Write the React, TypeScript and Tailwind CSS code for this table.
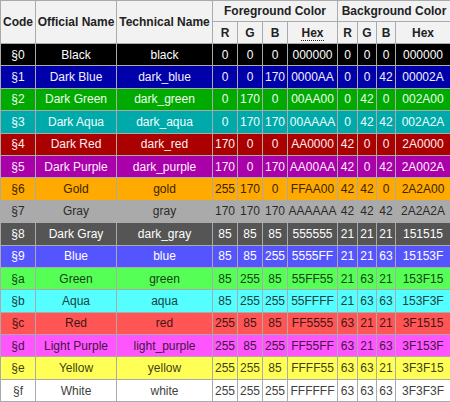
const rows = [
  { code: "§0", name: "Black", tech: "black", fg: ["0", "0", "0", "000000"], bg: ["0", "0", "0", "000000"], cls: "bg-[#000000] text-white" },
  { code: "§1", name: "Dark Blue", tech: "dark_blue", fg: ["0", "0", "170", "0000AA"], bg: ["0", "0", "42", "00002A"], cls: "bg-[#0000AA] text-[#f0f0ff]" },
  { code: "§2", name: "Dark Green", tech: "dark_green", fg: ["0", "170", "0", "00AA00"], bg: ["0", "42", "0", "002A00"], cls: "bg-[#00AA00] text-[#f0fff0]" },
  { code: "§3", name: "Dark Aqua", tech: "dark_aqua", fg: ["0", "170", "170", "00AAAA"], bg: ["0", "42", "42", "002A2A"], cls: "bg-[#00AAAA] text-[#f0ffff]" },
  { code: "§4", name: "Dark Red", tech: "dark_red", fg: ["170", "0", "0", "AA0000"], bg: ["42", "0", "0", "2A0000"], cls: "bg-[#AA0000] text-[#fff0f0]" },
  { code: "§5", name: "Dark Purple", tech: "dark_purple", fg: ["170", "0", "170", "AA00AA"], bg: ["42", "0", "42", "2A002A"], cls: "bg-[#AA00AA] text-[#fff0ff]" },
  { code: "§6", name: "Gold", tech: "gold", fg: ["255", "170", "0", "FFAA00"], bg: ["42", "42", "0", "2A2A00"], cls: "bg-[#FFAA00] text-[#3a2400]" },
  { code: "§7", name: "Gray", tech: "gray", fg: ["170", "170", "170", "AAAAAA"], bg: ["42", "42", "42", "2A2A2A"], cls: "bg-[#AAAAAA] text-[#2a2a2a]" },
  { code: "§8", name: "Dark Gray", tech: "dark_gray", fg: ["85", "85", "85", "555555"], bg: ["21", "21", "21", "151515"], cls: "bg-[#555555] text-white" },
  { code: "§9", name: "Blue", tech: "blue", fg: ["85", "85", "255", "5555FF"], bg: ["21", "21", "63", "15153F"], cls: "bg-[#5555FF] text-white" },
  { code: "§a", name: "Green", tech: "green", fg: ["85", "255", "85", "55FF55"], bg: ["21", "63", "21", "153F15"], cls: "bg-[#55FF55] text-[#153F15]" },
  { code: "§b", name: "Aqua", tech: "aqua", fg: ["85", "255", "255", "55FFFF"], bg: ["21", "63", "63", "153F3F"], cls: "bg-[#55FFFF] text-[#153F3F]" },
  { code: "§c", name: "Red", tech: "red", fg: ["255", "85", "85", "FF5555"], bg: ["63", "21", "21", "3F1515"], cls: "bg-[#FF5555] text-[#3F1515]" },
  { code: "§d", name: "Light Purple", tech: "light_purple", fg: ["255", "85", "255", "FF55FF"], bg: ["63", "21", "63", "3F153F"], cls: "bg-[#FF55FF] text-[#3F153F]" },
  { code: "§e", name: "Yellow", tech: "yellow", fg: ["255", "255", "85", "FFFF55"], bg: ["63", "63", "21", "3F3F15"], cls: "bg-[#FFFF55] text-[#3F3F15]" },
  { code: "§f", name: "White", tech: "white", fg: ["255", "255", "255", "FFFFFF"], bg: ["63", "63", "63", "3F3F3F"], cls: "bg-[#FFFFFF] text-[#3F3F3F]" },
];

const th = "border border-[#aaaaaa] bg-[#f2f2f2] text-[#222222] font-bold text-center p-0";
const td = "border border-[#aaaaaa] text-center p-0 whitespace-nowrap";

export default function App() {
  return (
    <div className="w-[450px] h-[402px] overflow-hidden bg-white font-['Liberation_Sans',Arial,sans-serif] text-[12px] leading-none">
      <table className="table-fixed border-collapse w-[450px]">
        <colgroup>
          <col className="w-[35px]" />
          <col className="w-[81px]" />
          <col className="w-[96px]" />
          <col className="w-[25px]" />
          <col className="w-[25px]" />
          <col className="w-[25px]" />
          <col className="w-[50px]" />
          <col className="w-[20px]" />
          <col className="w-[19px]" />
          <col className="w-[19px]" />
          <col className="w-[55px]" />
        </colgroup>
        <thead>
          <tr className="h-[21px]">
            <th rowSpan={2} className={th}>Code</th>
            <th rowSpan={2} className={th}>Official Name</th>
            <th rowSpan={2} className={th}>Technical Name</th>
            <th colSpan={4} className={th}>Foreground Color</th>
            <th colSpan={4} className={th}>Background Color</th>
          </tr>
          <tr className="h-[22px]">
            <th className={th}>R</th>
            <th className={th}>G</th>
            <th className={th}>B</th>
            <th className={th}>
              <span className="border-b border-dotted border-[#222222]">Hex</span>
            </th>
            <th className={th}>R</th>
            <th className={th}>G</th>
            <th className={th}>B</th>
            <th className={th}>Hex</th>
          </tr>
        </thead>
        <tbody>
          {rows.map((r) => (
            <tr key={r.code} className={`h-[22.4px] ${r.cls}`}>
              <td className={td}>{r.code}</td>
              <td className={td}>{r.name}</td>
              <td className={td}>{r.tech}</td>
              {r.fg.map((v, i) => (
                <td key={"f" + i} className={td}>{v}</td>
              ))}
              {r.bg.map((v, i) => (
                <td key={"b" + i} className={td}>{v}</td>
              ))}
            </tr>
          ))}
        </tbody>
      </table>
    </div>
  );
}
